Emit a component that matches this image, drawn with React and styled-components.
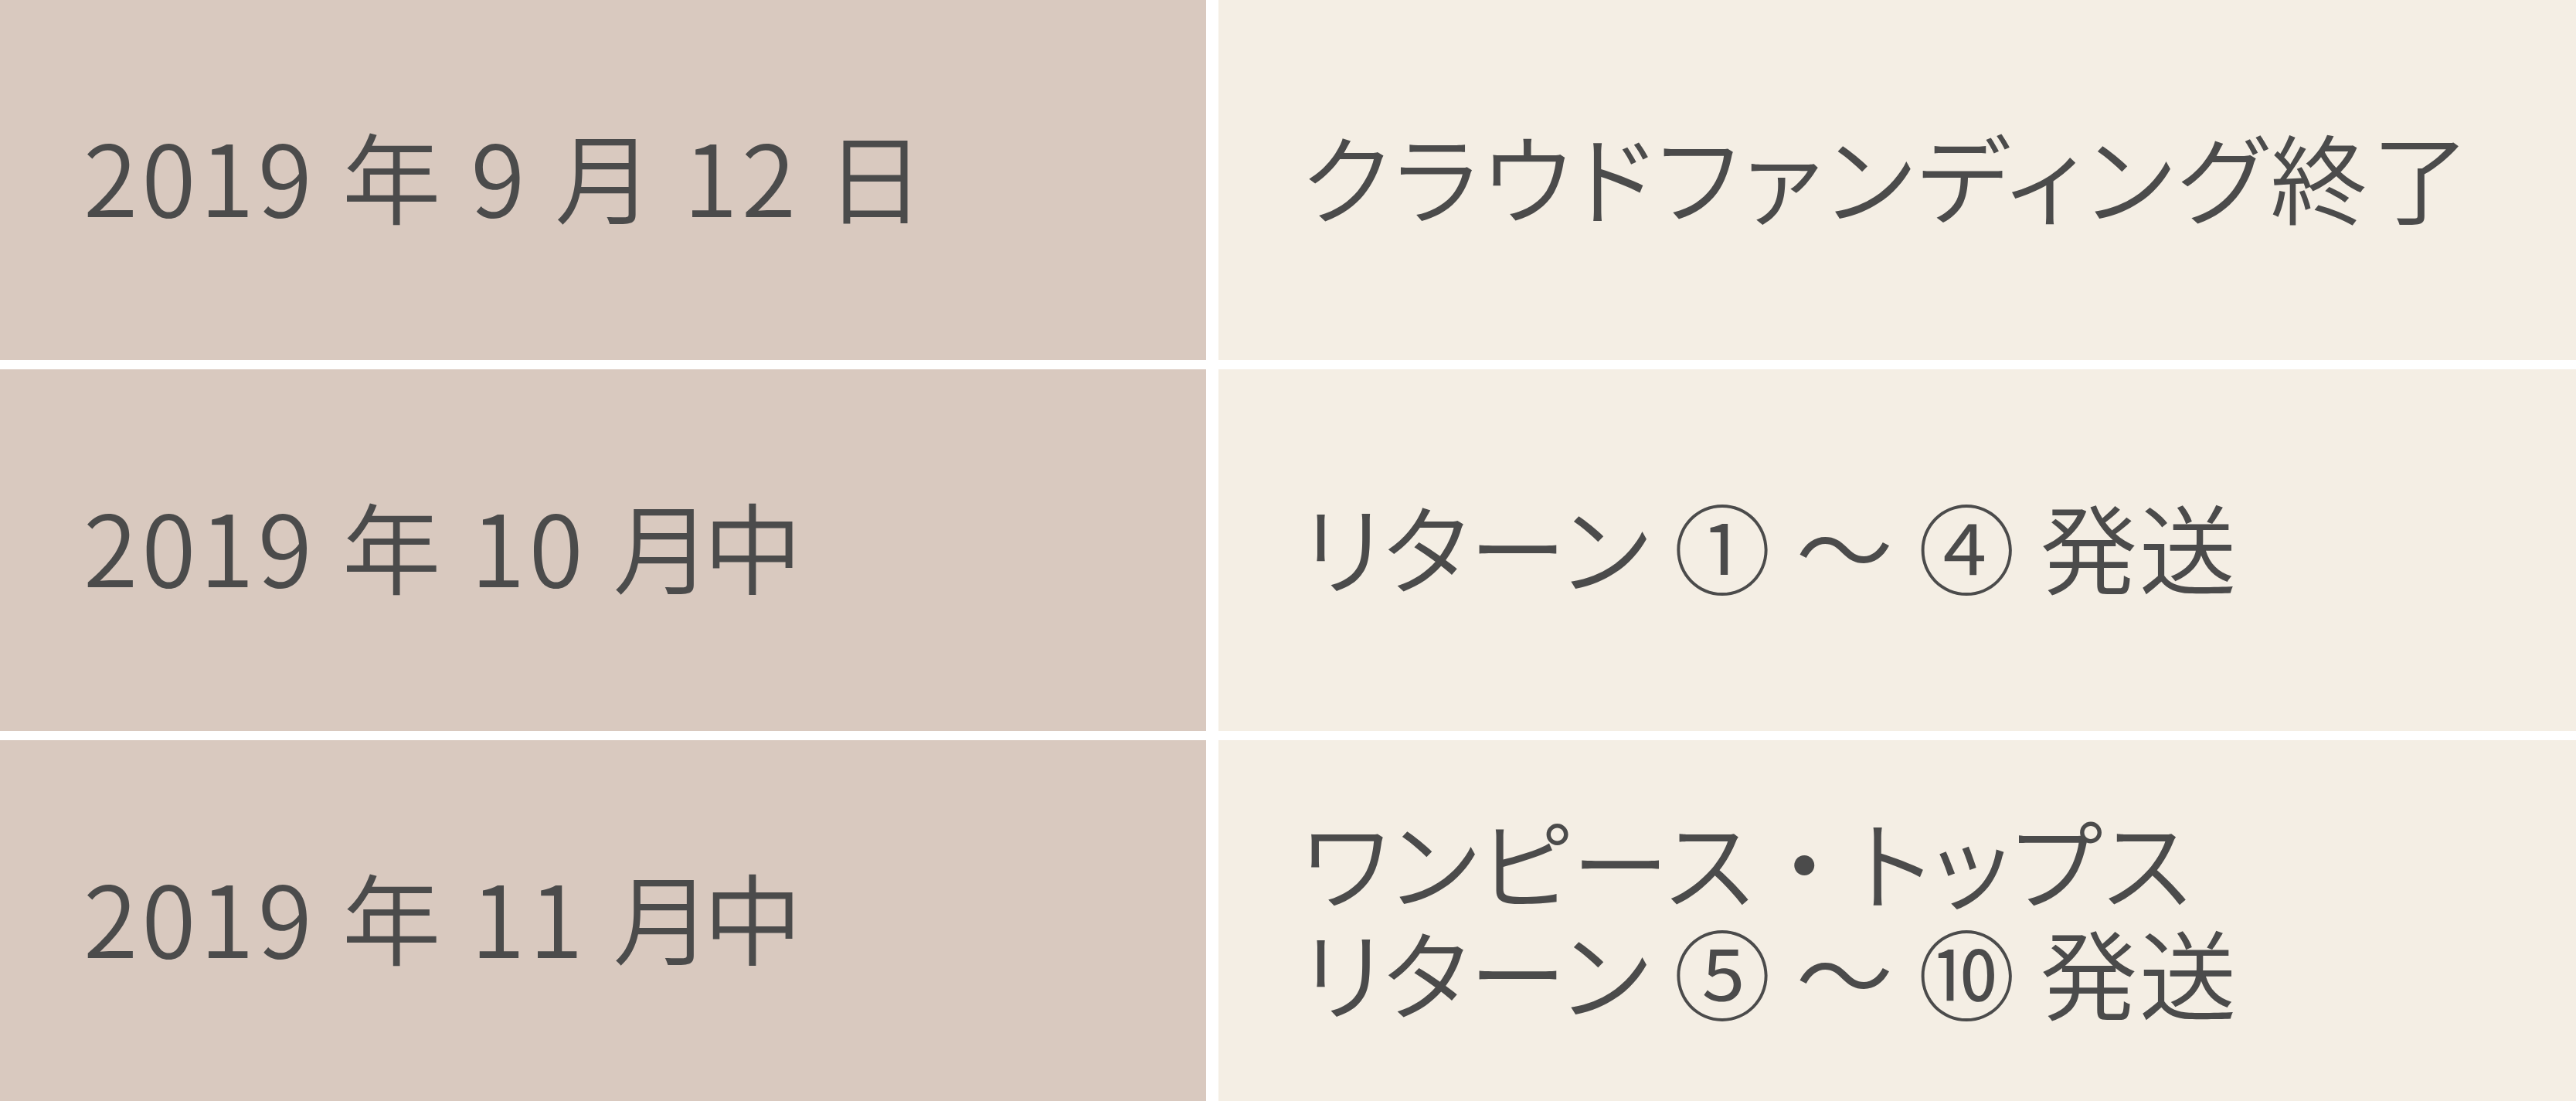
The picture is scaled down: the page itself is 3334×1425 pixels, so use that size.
import React from 'react';
import styled, { createGlobalStyle } from 'styled-components';

const GlobalStyle = createGlobalStyle`
    html, body {
        margin: 0;
        padding: 0;
        background: #ffffff;
    }
`;

const ScheduleTable = styled.div`
    width: 3334px;
    height: 1425px;
    display: grid;
    grid-template-columns: 1561px 1757px;
    grid-template-rows: 466px 468px 467px;
    column-gap: 16px;
    row-gap: 12px;
    background: #ffffff;
    font-family: "Noto Sans CJK JP", "Noto Sans", sans-serif;
    font-weight: 350;
    color: #4b4b4b;
`;

const Cell = styled.div`
    display: flex;
    align-items: center;
    background: ${(props) => (props.$date ? '#d9c9bf' : '#f4eee4')};
    padding: 0 0 14px 108px;
    box-sizing: border-box;
`;

const DateText = styled.span`
    font-size: 128px;
    line-height: 1;
    letter-spacing: 5px;
    white-space: pre;
`;

const Tight = styled.span`
    letter-spacing: -11px;
`;

const EventText = styled.div`
    font-size: 126px;
    line-height: 143px;
    font-feature-settings: "palt";
    white-space: pre;
`;

const EventLine = styled.div`
    letter-spacing: ${(props) => props.$spacing || 2}px;
`;

const Dot = styled.span`
    font-feature-settings: normal;
`;

const schedule = [
    { date: '2019 年 9 月 12 日', event: [{ text: 'クラウドファンディング終了', spacing: 6 }] },
    { date: ['2019 年 10 ', <Tight key="m">月</Tight>, '中'], event: [{ text: 'リターン ① ～ ④ 発送' }] },
    {
        date: ['2019 年 11 ', <Tight key="m">月</Tight>, '中'],
        event: [
            { text: ['ワンピース', <Dot key="dot">・</Dot>, 'トップス'], spacing: 3 },
            { text: 'リターン ⑤ ～ ⑩ 発送' },
        ],
    },
];

const App = () => {
    return (
        <>
            <GlobalStyle />
            <ScheduleTable>
                {schedule.map((row, r) => (
                    <React.Fragment key={r}>
                        <Cell $date>
                            <DateText>{row.date}</DateText>
                        </Cell>
                        <Cell>
                            <EventText>
                                {row.event.map((line, i) => (
                                    <EventLine key={i} $spacing={line.spacing}>
                                        {line.text}
                                    </EventLine>
                                ))}
                            </EventText>
                        </Cell>
                    </React.Fragment>
                ))}
            </ScheduleTable>
        </>
    );
};

export default App;
